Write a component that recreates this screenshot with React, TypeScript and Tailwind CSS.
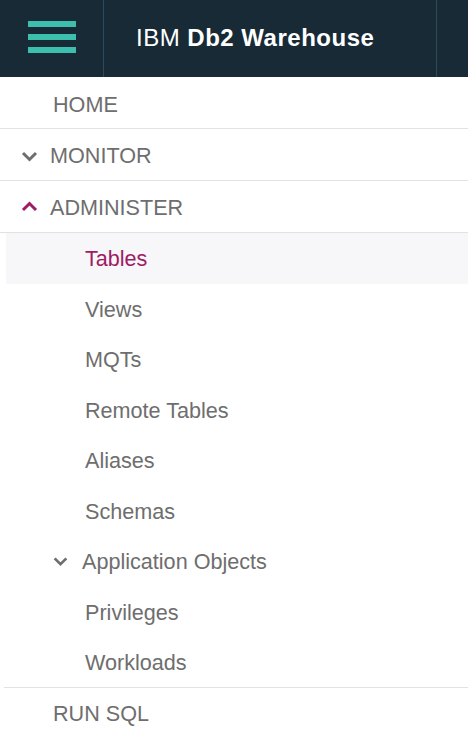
import React from "react";

const Chevron = ({ up, color, className }: { up?: boolean; color: string; className?: string }) => (
  <svg width="17" height="11" viewBox="0 0 17 11" className={className}>
    <path
      d={up ? "M2 9 L8.5 2.5 L15 9" : "M2 2 L8.5 8.5 L15 2"}
      fill="none"
      stroke={color}
      strokeWidth="3"
    />
  </svg>
);

const subItems = ["Views", "MQTs", "Remote Tables", "Aliases", "Schemas"];

export default function App() {
  return (
    <div className="w-[468px] h-[738px] overflow-hidden bg-white" style={{ fontFamily: '"Liberation Sans", Arial, sans-serif' }}>
      <header className="h-[77px] bg-[#172a36] flex">
        <div className="w-[104px] border-r border-[#2c4a5e] flex flex-col pl-[28px] pt-[21px] gap-[7px]">
          <div className="w-[48px] h-[6px] bg-[#3dbfad]" />
          <div className="w-[48px] h-[6px] bg-[#3dbfad]" />
          <div className="w-[48px] h-[6px] bg-[#3dbfad]" />
        </div>
        <div className="w-[333px] border-r border-[#2c4a5e] pl-[32px] pt-[24px] text-[24px] leading-[28px] text-white tracking-[0.5px]">
          <span className="font-light">IBM</span> <span className="font-bold">Db2 Warehouse</span>
        </div>
      </header>
      <nav className="text-[#6e6e6e] text-[21.6px]">
        <div className="h-[52px] border-b border-[#e2e2e2] flex items-center pl-[53px] pt-[5px]">HOME</div>
        <div className="h-[52px] border-b border-[#e2e2e2] flex items-center pl-[21px] pt-[4px]">
          <Chevron color="#6e6e6e" className="mr-[12px] -mt-[1px]" />
          MONITOR
        </div>
        <div className="h-[52px] border-b border-[#e2e2e2] flex items-center pl-[21px] pt-[4px]">
          <Chevron up color="#a11b63" className="mr-[12px] -mt-[4px]" />
          ADMINISTER
        </div>
        <div className="h-[50.5px] ml-[6px] bg-[#f7f7f9] flex items-center pl-[79px] pt-[2px] text-[#a11b63]">Tables</div>
        {subItems.map((s) => (
          <div key={s} className="h-[50.5px] flex items-center pl-[85px] pt-[2px]">{s}</div>
        ))}
        <div className="h-[50.5px] flex items-center pl-[52px] pt-[2px]">
          <Chevron color="#6e6e6e" className="mr-[13px] scale-90 -mt-[1px]" />
          Application Objects
        </div>
        <div className="h-[50.5px] flex items-center pl-[85px] pt-[2px]">Privileges</div>
        <div className="h-[50.5px] flex items-center pl-[81px] pt-[2px] border-b border-[#e2e2e2] ml-[4px]">Workloads</div>
        <div className="h-[51px] flex items-center pl-[53px] pt-[3px]">RUN SQL</div>
      </nav>
    </div>
  );
}
